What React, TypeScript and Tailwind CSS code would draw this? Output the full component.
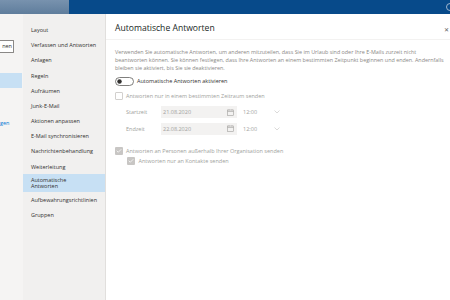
import { Check } from "lucide-react"

const navItems = [
  "Layout",
  "Verfassen und Antworten",
  "Anlagen",
  "Regeln",
  "Aufräumen",
  "Junk-E-Mail",
  "Aktionen anpassen",
  "E-Mail synchronisieren",
  "Nachrichtenbehandlung",
  "Weiterleitung",
]

function CalendarIcon() {
  return (
    <svg width="7" height="7" viewBox="0 0 14 14" fill="none" stroke="#a19f9d" strokeWidth="1.2">
      <rect x="1" y="2" width="12" height="11" />
      <line x1="1" y1="5" x2="13" y2="5" />
      <line x1="4" y1="0.5" x2="4" y2="3" />
      <line x1="10" y1="0.5" x2="10" y2="3" />
    </svg>
  )
}

function Chevron() {
  return (
    <svg width="6" height="4" viewBox="0 0 12 8" fill="none" stroke="#c8c6c4" strokeWidth="1.3">
      <polyline points="1,1 6,6 11,1" />
    </svg>
  )
}

function Toggle() {
  return (
    <svg width="19" height="9" viewBox="0 0 38 18" className="shrink-0">
      <rect x="1" y="1" width="36" height="16" rx="8" fill="#fff" stroke="#605e5c" strokeWidth="1.6" />
      <circle cx="9" cy="9" r="4.5" fill="#323130" />
    </svg>
  )
}

function DisabledCheck({ checked }: { checked?: boolean }) {
  return checked ? (
    <span className="flex h-[8px] w-[8px] shrink-0 items-center justify-center rounded-[1px] bg-[#c8c6c4]">
      <Check className="h-[6px] w-[6px] text-white" strokeWidth={3} />
    </span>
  ) : (
    <span className="h-[8px] w-[8px] shrink-0 rounded-[1px] border border-[#d2d0ce] bg-white" />
  )
}

function DateRow({ label, date, mt }: { label: string; date: string; mt: string }) {
  return (
    <div className={`flex h-[12px] items-center pl-[11px] ${mt}`}>
      <span className="w-[35px] text-[#a19f9d]">{label}</span>
      <div className="flex h-[12px] w-[76px] items-center justify-between bg-[#f3f2f1] pl-[2px] pr-[3px] text-[#a19f9d]">
        <span>{date}</span>
        <CalendarIcon />
      </div>
      <span className="ml-[6px] w-[31px] text-[#a19f9d]">12:00</span>
      <Chevron />
    </div>
  )
}

export default function App() {
  return (
    <div className="flex h-[300px] w-[450px] flex-col overflow-hidden bg-white font-['Open_Sans',sans-serif] text-[5.5px] text-[#323130]">
      <header className="flex h-[14px] shrink-0">
        <div className="w-[69px] bg-gradient-to-b from-[#7892ae] to-[#5f7d9c]" />
        <div className="relative flex-1 bg-[#074a8a]">
          <span className="absolute right-[-4px] top-[3px] h-[8px] w-[8px] rounded-full border border-[#9fb6cf]" />
        </div>
      </header>

      <div className="flex flex-1">
        <aside className="flex w-[23px] shrink-0 flex-col bg-[#f5f4f3]">
          <div className="mt-[26px] flex h-[13px] w-[14px] items-center justify-end rounded-r-[1px] border border-l-0 border-[#8a8886] bg-white pr-[1px] text-[#323130]">
            nen
          </div>
          <div className="mt-[20px] h-[15px] w-[22px] bg-[#c7e0f4]" />
          <div className="mt-[32px] leading-[6px] text-[#0078d4]">gen</div>
        </aside>

        <nav className="flex w-[83px] shrink-0 flex-col border-r border-[#e1dfdd] bg-[#f1f0ef] pt-[8.5px]">
          {navItems.map((item) => (
            <div key={item} className="flex h-[15.2px] items-center whitespace-nowrap pl-[8px]">
              {item}
            </div>
          ))}
          <div className="flex h-[17.5px] flex-col justify-center bg-[#c7e0f4] pl-[8px] leading-[6.5px]">
            <span>Automatische</span>
            <span>Antworten</span>
          </div>
          <div className="flex h-[15.5px] items-center whitespace-nowrap pl-[8px]">Aufbewahrungsrichtlinien</div>
          <div className="flex h-[15.5px] items-center pl-[8px]">Gruppen</div>
        </nav>

        <main className="relative flex min-w-0 flex-1 flex-col">
          <div className="flex h-[26px] items-center border-b border-[#f3f2f1] pl-[9px] pt-[4px]">
            <h1 className="text-[8.6px] text-[#201f1e]">Automatische Antworten</h1>
            <span className="absolute right-[1px] top-[12px] text-[6px] text-[#605e5c]">✕</span>
          </div>

          <div className="pl-[9px]">
            <div className="mt-[8px] whitespace-nowrap text-[5.4px] leading-[8.2px] text-[#8a8886]">
              <div>Verwenden Sie automatische Antworten, um anderen mitzuteilen, dass Sie im Urlaub sind oder Ihre E-Mails zurzeit nicht</div>
              <div>beantworten können. Sie können festlegen, dass Ihre Antworten an einem bestimmten Zeitpunkt beginnen und enden. Andernfalls</div>
              <div>bleiben sie aktiviert, bis Sie sie deaktivieren.</div>
            </div>

            <div className="mt-[4.5px] flex h-[9px] items-center">
              <Toggle />
              <span className="ml-[3px]">Automatische Antworten aktivieren</span>
            </div>

            <div className="mt-[5.5px] flex h-[9px] items-center">
              <DisabledCheck />
              <span className="ml-[3px] text-[#a19f9d]">Antworten nur in einem bestimmten Zeitraum senden</span>
            </div>

            <DateRow label="Startzeit" date="21.08.2020" mt="mt-[5.8px]" />
            <DateRow label="Endzeit" date="22.08.2020" mt="mt-[4.5px]" />

            <div className="mt-[12.5px] flex h-[8px] items-center">
              <DisabledCheck checked />
              <span className="ml-[3px] text-[#a19f9d]">Antworten an Personen außerhalb Ihrer Organisation senden</span>
            </div>
            <div className="mt-[2px] flex h-[8px] items-center pl-[12px]">
              <DisabledCheck checked />
              <span className="ml-[3.5px] text-[#a19f9d]">Antworten nur an Kontakte senden</span>
            </div>
          </div>
        </main>
      </div>
    </div>
  )
}
